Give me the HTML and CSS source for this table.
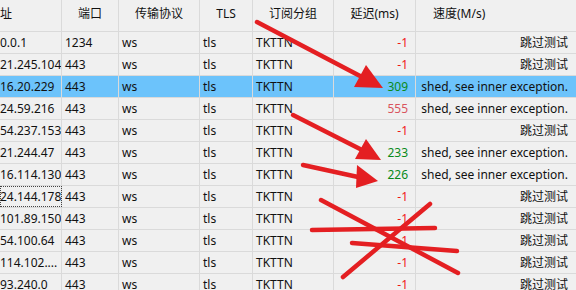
FILE: index.html
```html
<!DOCTYPE html>
<html lang="zh">
<head>
<meta charset="utf-8">
<title>Servers</title>
<link rel="stylesheet" href="styles.css">
</head>
<body>
<div class="view">
  <div class="grid">
    <div class="row head">
      <div class="cell c-addr">址</div>
      <div class="cell center">端口</div>
      <div class="cell center">传输协议</div>
      <div class="cell center">TLS</div>
      <div class="cell center">订阅分组</div>
      <div class="cell center">延迟(ms)</div>
      <div class="cell h-speed">速度(M/s)</div>
    </div>
    <div class="row">
      <div class="cell c-addr">0.0.1</div><div class="cell">1234</div><div class="cell">ws</div><div class="cell">tls</div><div class="cell">TKTTN</div><div class="cell num bad">-1</div><div class="cell num">跳过测试</div>
    </div>
    <div class="row">
      <div class="cell c-addr">21.245.104</div><div class="cell">443</div><div class="cell">ws</div><div class="cell">tls</div><div class="cell">TKTTN</div><div class="cell num bad">-1</div><div class="cell num">跳过测试</div>
    </div>
    <div class="row selected">
      <div class="cell c-addr">16.20.229</div><div class="cell">443</div><div class="cell">ws</div><div class="cell">tls</div><div class="cell">TKTTN</div><div class="cell num good">309</div><div class="cell num">shed, see inner exception.</div>
    </div>
    <div class="row">
      <div class="cell c-addr">24.59.216</div><div class="cell">443</div><div class="cell">ws</div><div class="cell">tls</div><div class="cell">TKTTN</div><div class="cell num slow">555</div><div class="cell num">shed, see inner exception.</div>
    </div>
    <div class="row">
      <div class="cell c-addr">54.237.153</div><div class="cell">443</div><div class="cell">ws</div><div class="cell">tls</div><div class="cell">TKTTN</div><div class="cell num bad">-1</div><div class="cell num">跳过测试</div>
    </div>
    <div class="row">
      <div class="cell c-addr">21.244.47</div><div class="cell">443</div><div class="cell">ws</div><div class="cell">tls</div><div class="cell">TKTTN</div><div class="cell num good">233</div><div class="cell num">shed, see inner exception.</div>
    </div>
    <div class="row">
      <div class="cell c-addr">16.114.130</div><div class="cell">443</div><div class="cell">ws</div><div class="cell">tls</div><div class="cell">TKTTN</div><div class="cell num good">226</div><div class="cell num">shed, see inner exception.</div>
    </div>
    <div class="row">
      <div class="cell c-addr focus">24.144.178</div><div class="cell">443</div><div class="cell">ws</div><div class="cell">tls</div><div class="cell">TKTTN</div><div class="cell num bad">-1</div><div class="cell num">跳过测试</div>
    </div>
    <div class="row">
      <div class="cell c-addr">101.89.150</div><div class="cell">443</div><div class="cell">ws</div><div class="cell">tls</div><div class="cell">TKTTN</div><div class="cell num bad">-1</div><div class="cell num">跳过测试</div>
    </div>
    <div class="row">
      <div class="cell c-addr">54.100.64</div><div class="cell">443</div><div class="cell">ws</div><div class="cell">tls</div><div class="cell">TKTTN</div><div class="cell num bad">-1</div><div class="cell num">跳过测试</div>
    </div>
    <div class="row">
      <div class="cell c-addr">114.102....</div><div class="cell">443</div><div class="cell">ws</div><div class="cell">tls</div><div class="cell">TKTTN</div><div class="cell num bad">-1</div><div class="cell num">跳过测试</div>
    </div>
    <div class="row">
      <div class="cell c-addr">93.240.0</div><div class="cell">443</div><div class="cell">ws</div><div class="cell">tls</div><div class="cell">TKTTN</div><div class="cell num bad">-1</div><div class="cell num">跳过测试</div>
    </div>
  </div>

  <svg class="marks" width="576" height="290" viewBox="0 0 576 290" xmlns="http://www.w3.org/2000/svg">
    <g stroke="#e41f22" stroke-width="4.5" stroke-linecap="round" fill="none">
      <line x1="257" y1="22" x2="362" y2="77"/>
      <line x1="293" y1="115" x2="362" y2="150"/>
      <line x1="303" y1="165" x2="358" y2="177"/>
      <line x1="321" y1="200" x2="458" y2="273"/>
      <line x1="343" y1="277" x2="430" y2="204"/>
      <line x1="312" y1="230" x2="435" y2="228"/>
      <line x1="352" y1="243" x2="457" y2="251"/>
    </g>
    <g fill="#e41f22">
      <polygon points="383,88 366,65 354,87"/>
      <polygon points="381,160 366,139 355,159"/>
      <polygon points="378,181 357,165 356,188"/>
    </g>
  </svg>
</div>
</body>
</html>
```

FILE: styles.css
```css
html, body {
  margin: 0;
  padding: 0;
  background: #f0f0f0;
}

body {
  width: 576px;
  height: 290px;
  overflow: hidden;
  font-family: "Segoe UI", "Noto Sans", "Noto Sans CJK SC", sans-serif;
  font-size: 12px;
  color: #111;
}

.view {
  position: relative;
  width: 576px;
  height: 290px;
  overflow: hidden;
}

.grid {
  display: flex;
  flex-direction: column;
  width: 600px;
}

.row {
  display: grid;
  grid-template-columns: 62px 57px 81px 53px 81px 82px 184px;
  height: 22px;
  border-bottom: 1px solid #dadada;
  box-sizing: border-box;
  background: #f0f0f0;
}

.row.head {
  height: 32px;
}

.row.selected {
  background: #6cc3fb;
}

.cell {
  display: flex;
  align-items: center;
  padding: 0 3px;
  border-right: 1px solid #dadada;
  white-space: nowrap;
  overflow: hidden;
  line-height: 16px;
}

.head .cell {
  align-items: flex-start;
  padding-top: 6px;
}

.cell.center {
  justify-content: center;
}

.cell.h-speed {
  padding-left: 17px;
}

.cell.c-addr {
  padding-left: 0;
}

.cell.focus {
  outline: 1px dotted #444;
  outline-offset: -1px;
}

.cell.num {
  justify-content: flex-end;
  padding-right: 7px;
}

.row .cell:last-child {
  padding-right: 31px;
}

.bad {
  color: #f01818;
}

.good {
  color: #0a8a1a;
}

.slow {
  color: #d9545e;
}

.marks {
  position: absolute;
  left: 0;
  top: 0;
  pointer-events: none;
}
```
